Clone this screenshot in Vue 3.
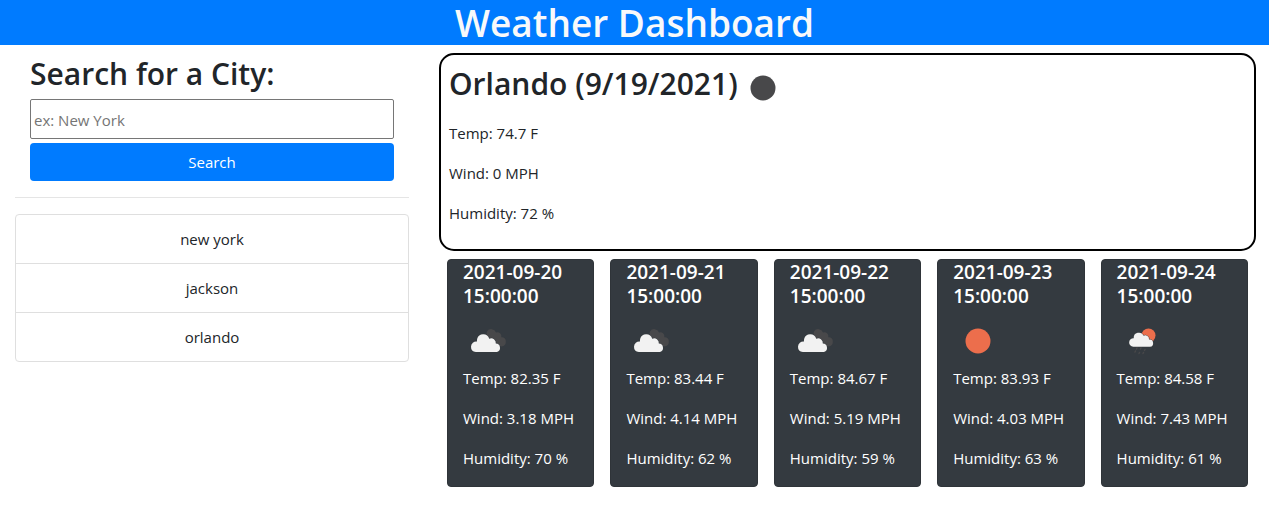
<script setup>
import { ref } from 'vue'

const query = ref('')
const cities = ['new york', 'jackson', 'orlando']
const current = { city: 'Orlando', date: '9/19/2021', temp: 74.7, wind: 0, humidity: 72 }
const forecast = [
  { date: '2021-09-20', icon: 'clouds', temp: 82.35, wind: 3.18, humidity: 70 },
  { date: '2021-09-21', icon: 'clouds', temp: 83.44, wind: 4.14, humidity: 62 },
  { date: '2021-09-22', icon: 'clouds', temp: 84.67, wind: 5.19, humidity: 59 },
  { date: '2021-09-23', icon: 'sun', temp: 83.93, wind: 4.03, humidity: 63 },
  { date: '2021-09-24', icon: 'rain', temp: 84.58, wind: 7.43, humidity: 61 },
]
</script>

<template>
  <div class="page">
    <header class="header">
      <h1>Weather Dashboard</h1>
    </header>
    <div class="columns">
      <aside class="sidebar">
        <form class="search" @submit.prevent>
          <h2><label for="city">Search for a City:</label></h2>
          <input id="city" v-model="query" type="text" placeholder="ex: New York" />
          <button type="submit">Search</button>
        </form>
        <hr />
        <ul class="history">
          <li v-for="city in cities" :key="city">{{ city }}</li>
        </ul>
      </aside>
      <main class="results">
        <section class="current">
          <div class="title">
            <h2>{{ current.city }} ({{ current.date }})</h2>
            <svg class="icon" viewBox="0 0 50 50" aria-hidden="true">
              <circle cx="25" cy="25" r="12.5" fill="#48484a" />
            </svg>
          </div>
          <p>Temp: {{ current.temp }} F</p>
          <p>Wind: {{ current.wind }} MPH</p>
          <p>Humidity: {{ current.humidity }} %</p>
        </section>
        <section class="forecast">
          <article v-for="day in forecast" :key="day.date" class="card">
            <h3>{{ day.date }} 15:00:00</h3>
            <svg class="icon" viewBox="0 0 50 50" aria-hidden="true">
              <template v-if="day.icon === 'clouds'">
                <path d="M22 24 L24 15.5 A5 5 0 0 1 33 16.5 A4 4 0 0 1 38.3 21.2 A3.9 3.9 0 0 1 42.8 25.5 A4.3 4.3 0 0 1 38.5 30.5 L34 29 Z" fill="#48484a" />
                <path d="M12.8 36 A5.3 5.3 0 0 1 8 30.7 A5.3 5.3 0 0 1 14 25.6 A6.3 6.3 0 0 1 14.2 22.8 A6.2 6.2 0 0 1 26.2 22.8 A4.6 4.6 0 0 1 32.8 27.6 A4.3 4.3 0 0 1 34 36 Z" fill="#f2f2f2" stroke="#353a3f" stroke-width="1" paint-order="stroke" />
              </template>
              <circle v-else-if="day.icon === 'sun'" cx="25" cy="25" r="12.5" fill="#ec6e4c" />
              <template v-else>
                <circle cx="31.5" cy="19.5" r="7" fill="#ec6e4c" />
                <path d="M16.2 30.8 A4.3 4.3 0 0 1 16.7 22.2 A5.2 5.2 0 0 1 26.6 19.7 A3.8 3.8 0 0 1 32 23.6 A3.6 3.6 0 0 1 33 30.8 Z" fill="#f2f2f2" stroke="#353a3f" stroke-width="1" paint-order="stroke" />
                <path d="M20 32 L19.5 33 M24 32 L23.5 33 M28 33.5 L27.5 34.5 M18.5 35 L18 36 M22.5 36.5 L22 37.5 M26.5 36.5 L26 37.5" stroke="#48484a" stroke-width="1.5" stroke-linecap="round" />
              </template>
            </svg>
            <p>Temp: {{ day.temp }} F</p>
            <p>Wind: {{ day.wind }} MPH</p>
            <p>Humidity: {{ day.humidity }} %</p>
          </article>
        </section>
      </main>
    </div>
  </div>
</template>

<style>
body {
  margin: 0;
  background: #fff;
}
</style>

<style scoped>
* {
  box-sizing: border-box;
}

.page {
  font-family: "Open Sans", "Noto Sans", sans-serif;
  font-size: 15px;
  line-height: 24px;
  color: #212529;
}

h1,
h2,
h3,
p,
ul {
  margin: 0;
  padding: 0;
}

h2 {
  font-size: 30px;
  font-weight: 600;
  line-height: 42px;
}

p {
  margin-bottom: 16px;
}

.header {
  background: #007bff;
  color: #f8f9fa;
  text-align: center;
}

.header h1 {
  font-size: 37px;
  font-weight: 600;
  line-height: 45px;
}

.columns {
  display: grid;
  grid-template-columns: 1fr 2fr;
  padding-top: 8px;
}

.sidebar {
  padding: 0 14px 0 15px;
}

.search {
  display: flex;
  flex-direction: column;
  padding: 0 15px;
}

.search h2 {
  margin-bottom: 4px;
}

.search input {
  height: 40px;
  padding: 2px 3px 1px;
  border: 1px solid #767676;
  border-radius: 2px;
  font: inherit;
  color: inherit;
}

.search input::placeholder {
  color: #757575;
}

.search button {
  height: 38px;
  margin-top: 4px;
  border: 0;
  border-radius: 4px;
  background: #007bff;
  color: #fff;
  font: inherit;
}

hr {
  margin: 16px 0;
  border: 0;
  border-top: 1px solid #e5e5e5;
}

.history {
  border: 1px solid #dfdfdf;
  border-radius: 4px;
  list-style: none;
  text-align: center;
}

.history li {
  padding: 12px 20px;
}

.history li + li {
  border-top: 1px solid #dfdfdf;
}

.results {
  padding: 0 13px 0 16px;
}

.current {
  padding: 8px;
  border: 2px solid #000;
  border-radius: 15px;
}

.title {
  display: flex;
  margin-bottom: 8px;
}

.icon {
  display: block;
  flex: none;
  width: 50px;
  height: 50px;
}

.forecast {
  display: grid;
  grid-template-columns: repeat(5, 1fr);
  gap: 16px;
  padding: 8px;
}

.card {
  padding: 0 15px;
  border: 1px solid #2f3439;
  border-radius: 4px;
  background: #343a40;
  color: #fff;
}

.card h3 {
  margin-bottom: 8px;
  font-size: 19px;
  font-weight: 600;
  line-height: 24px;
}
</style>
